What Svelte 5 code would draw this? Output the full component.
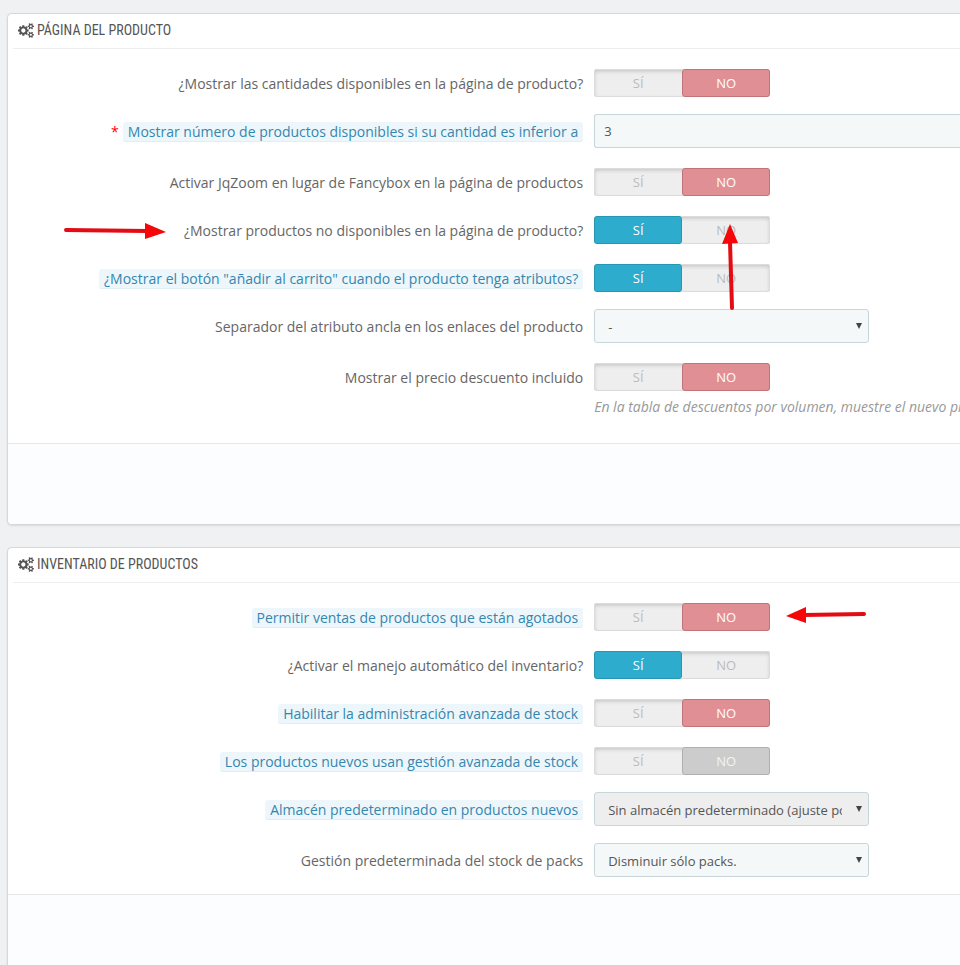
<script lang="ts">
  type Field = {
    id: string
    label: string
    type: 'switch' | 'text' | 'select'
    value: string
    hint?: boolean
    required?: boolean
    disabled?: boolean
    help?: string
  }

  let panels: { title: string, fields: Field[] }[] = $state([
    {
      title: 'Página del producto',
      fields: [
        { id: 'display_qties', label: '¿Mostrar las cantidades disponibles en la página de producto?', type: 'switch', value: 'no' },
        { id: 'last_qties', label: 'Mostrar número de productos disponibles si su cantidad es inferior a', type: 'text', value: '3', hint: true, required: true },
        { id: 'jqzoom', label: 'Activar JqZoom en lugar de Fancybox en la página de productos', type: 'switch', value: 'no' },
        { id: 'unavailable', label: '¿Mostrar productos no disponibles en la página de producto?', type: 'switch', value: 'si' },
        { id: 'add_to_cart', label: '¿Mostrar el botón "añadir al carrito" cuando el producto tenga atributos?', type: 'switch', value: 'si', hint: true },
        { id: 'separator', label: 'Separador del atributo ancla en los enlaces del producto', type: 'select', value: '-' },
        { id: 'discount', label: 'Mostrar el precio descuento incluido', type: 'switch', value: 'no', help: 'En la tabla de descuentos por volumen, muestre el nuevo precio' },
      ],
    },
    {
      title: 'Inventario de productos',
      fields: [
        { id: 'out_of_stock', label: 'Permitir ventas de productos que están agotados', type: 'switch', value: 'no', hint: true },
        { id: 'stock', label: '¿Activar el manejo automático del inventario?', type: 'switch', value: 'si' },
        { id: 'advanced', label: 'Habilitar la administración avanzada de stock', type: 'switch', value: 'no', hint: true },
        { id: 'advanced_new', label: 'Los productos nuevos usan gestión avanzada de stock', type: 'switch', value: 'no', hint: true, disabled: true },
        { id: 'warehouse', label: 'Almacén predeterminado en productos nuevos', type: 'select', value: 'Sin almacén predeterminado (ajuste por defecto)', hint: true, disabled: true },
        { id: 'packs', label: 'Gestión predeterminada del stock de packs', type: 'select', value: 'Disminuir sólo packs.' },
      ],
    },
  ])
</script>

<main>
  {#each panels as panel}
    <section class="panel">
      <h3>
        <svg class="cogs" viewBox="0 0 1920 1792" aria-hidden="true">
          <path d="M896 896q0-106-75-181t-181-75-181 75-75 181 75 181 181 75 181-75 75-181zm768 512q0-52-38-90t-90-38-90 38-38 90q0 53 37.500 90.500t90.500 37.500 90.500-37.500 37.500-90.500zm0-1024q0-52-38-90t-90-38-90 38-38 90q0 53 37.500 90.500t90.500 37.500 90.500-37.500 37.500-90.500zm-384 421v185q0 10-7 19.500t-16 10.500l-155 24q-11 35-32 76 34 48 90 115 7 11 7 20 0 12-7 19-23 30-82.500 89.500t-78.500 59.500q-11 0-21-7l-115-90q-37 19-77 31-11 108-23 155-7 24-30 24h-186q-11 0-20-7.500t-10-17.500l-23-153q-34-10-75-31l-118 89q-7 7-20 7-11 0-21-8-144-133-144-160 0-9 7-19 10-14 41-53t47-61q-23-44-35-82l-152-24q-10-1-17-9.500t-7-19.500v-185q0-10 7-19.500t16-10.500l155-24q11-35 32-76-34-48-90-115-7-11-7-20 0-12 7-20 22-30 82-89t79-59q11 0 21 7l115 90q34-18 77-32 11-108 23-154 7-24 30-24h186q11 0 20 7.500t10 17.500l23 153q34 10 75 31l118-89q8-7 20-7 11 0 21 8 144 133 144 160 0 8-7 19-12 16-42 54t-45 60q23 48 34 82l152 23q10 2 17 10.500t7 19.500zm640 533v140q0 16-149 31-12 27-30 52 51 113 51 138 0 4-4 7-122 71-124 71-8 0-46-47t-52-68q-20 2-30 2t-30-2q-14 21-52 68t-46 47q-2 0-124-71-4-3-4-7 0-25 51-138-18-25-30-52-149-15-149-31v-140q0-16 149-31 13-29 30-52-51-113-51-138 0-4 4-7 4-2 35-20t59-34 30-16q8 0 46 46.500t52 67.500q20-2 30-2t30 2q51-71 92-112l6-2q4 0 124 70 4 3 4 7 0 25-51 138 17 23 30 52 149 15 149 31zm0-1024v140q0 16-149 31-12 27-30 52 51 113 51 138 0 4-4 7-122 71-124 71-8 0-46-47t-52-68q-20 2-30 2t-30-2q-14 21-52 68t-46 47q-2 0-124-71-4-3-4-7 0-25 51-138-18-25-30-52-149-15-149-31v-140q0-16 149-31 13-29 30-52-51-113-51-138 0-4 4-7 4-2 35-20t59-34 30-16q8 0 46 46.500t52 67.500q20-2 30-2t30 2q51-71 92-112l6-2q4 0 124 70 4 3 4 7 0 25-51 138 17 23 30 52 149 15 149 31z" />
        </svg>
        {panel.title}
      </h3>

      <div class="fields">
        {#each panel.fields as field}
          <div class="row">
            <label class="name" class:required={field.required} id="{field.id}_label" for={field.type === 'switch' ? `${field.id}_${field.value}` : field.id}>
              <span class:hint={field.hint}>{field.label}</span>
            </label>

            <div class="control">
              {#if field.type === 'switch'}
                <div class="switch" role="radiogroup" aria-labelledby="{field.id}_label">
                  <input type="radio" name={field.id} id="{field.id}_si" value="si" bind:group={field.value} disabled={field.disabled} />
                  <label class="yes" for="{field.id}_si">SÍ</label>
                  <input type="radio" name={field.id} id="{field.id}_no" value="no" bind:group={field.value} disabled={field.disabled} />
                  <label class="no" for="{field.id}_no">NO</label>
                </div>
              {:else if field.type === 'text'}
                <input class="text" type="text" id={field.id} bind:value={field.value} />
              {:else}
                <div class="select">
                  <select id={field.id} disabled={field.disabled}>
                    <option>{field.value}</option>
                  </select>
                </div>
              {/if}

              {#if field.help}
                <p>{field.help}</p>
              {/if}
            </div>
          </div>
        {/each}
      </div>

      <footer></footer>
    </section>
  {/each}

  <svg class="arrows" width="960" height="965" aria-hidden="true">
    <path class="line" d="M66 230L147 231M732 308L730 242M864 614L804 615" />
    <path class="head" d="M166 232L145 223V239ZM730 224L722 244L738 243ZM786 616L806 607V623Z" />
  </svg>
</main>

<style>
  :global(body) {
    margin: 0;
    background: #eff1f2;
    font-family: "Open Sans", sans-serif;
    font-size: 14px;
    color: #666;
  }

  main {
    position: relative;
    display: flex;
    flex-direction: column;
    gap: 22px;
    box-sizing: border-box;
    min-height: 100vh;
    padding: 13px 0 0 7px;
    overflow: hidden;
  }

  .panel {
    display: flex;
    flex-direction: column;
    background: #fff;
    border: 1px solid #d3d8db;
    border-right: 0;
    border-radius: 5px 0 0 5px;
    box-shadow: 0 1px 2px rgba(0, 0, 0, 0.1);
    overflow: hidden;
  }
  .panel:nth-child(2) {
    flex: 1;
    border-bottom: 0;
    border-bottom-left-radius: 0;
  }

  h3 {
    display: flex;
    align-items: center;
    gap: 3px;
    height: 32px;
    margin: 0 0 0 5px;
    padding: 0 0 2px 5px;
    border-bottom: 1px solid #eee;
    font-family: "Ubuntu Condensed", "Roboto Condensed", "Open Sans Condensed", sans-serif;
    font-size: 14px;
    font-weight: 400;
    text-transform: uppercase;
    color: #555;
  }
  .cogs {
    width: 16px;
    height: 15px;
    fill: #555;
  }

  .fields {
    display: flex;
    flex-direction: column;
    gap: 17px;
    padding: 17px 0 17px 10px;
  }
  .row {
    display: grid;
    grid-template-columns: 60% 1fr;
    column-gap: 11px;
  }
  .name {
    padding-top: 7px;
    line-height: 21px;
    text-align: right;
    white-space: nowrap;
  }
  .required::before {
    content: "*";
    margin-right: 4px;
    color: #f00;
  }
  .hint {
    padding: 0 5px;
    background: #edf7fb;
    border-bottom: 1px solid #e0eff6;
    border-radius: 3px;
    color: #3586ae;
  }
  .control {
    min-width: 0;
  }

  .switch {
    position: relative;
    display: flex;
    box-sizing: border-box;
    width: 176px;
    height: 28px;
    margin-top: 3px;
    background: #eee;
    border-radius: 3px;
    box-shadow: inset 0 0 0 1px #dcdcdc, inset 0 2px 4px rgba(0, 0, 0, 0.2);
  }
  .switch input {
    position: absolute;
    opacity: 0;
  }
  .switch label {
    flex: 1;
    box-sizing: border-box;
    border: 1px solid transparent;
    border-radius: 3px;
    font-size: 13px;
    line-height: 26px;
    text-align: center;
    color: #bbb;
  }
  .switch input:checked + label {
    color: #fff;
  }
  .switch input:checked + .yes {
    background: #2eacce;
    border-color: #2597b5;
  }
  .switch input:checked + .no {
    background: #e08f95;
    border-color: #c0747a;
  }
  .switch input:disabled + label {
    color: #bbb;
  }
  .switch input:checked:disabled + label {
    background: #ccc;
    border-color: #b0b0b0;
    color: #f4f4f4;
  }

  .text,
  select {
    display: block;
    box-sizing: border-box;
    width: 100%;
    height: 34px;
    background: #f5f8f9;
    border: 1px solid #c7d6db;
    border-radius: 3px;
    font-family: inherit;
    font-size: 13px;
    color: #555;
  }
  .text {
    padding: 0 9px;
    border-right: 0;
    border-radius: 3px 0 0 3px;
  }
  .select {
    position: relative;
    max-width: 275px;
  }
  .select::after {
    content: "";
    position: absolute;
    top: 14px;
    right: 7px;
    border: 3px solid transparent;
    border-top: 6px solid #444;
    border-bottom: 0;
    pointer-events: none;
  }
  select {
    padding: 1px 26px 0 13px;
    appearance: none;
  }
  select:disabled {
    background: #eee;
    opacity: 1;
  }

  p {
    margin: 7px 0 0;
    font-size: 14px;
    font-style: italic;
    line-height: 18px;
    white-space: nowrap;
    overflow: hidden;
    color: #999;
  }
  .row:has(p) {
    padding-bottom: 10px;
  }

  footer {
    flex: 1;
    min-height: 70px;
    background: #fcfdfe;
    border-top: 1px solid #e6e6e6;
  }
  .panel:first-child footer {
    min-height: 80px;
  }

  .arrows {
    position: absolute;
    top: 0;
    left: 0;
    pointer-events: none;
  }
  .line {
    fill: none;
    stroke: #e30c14;
    stroke-width: 4;
    stroke-linecap: round;
  }
  .head {
    fill: #f60509;
  }
</style>
